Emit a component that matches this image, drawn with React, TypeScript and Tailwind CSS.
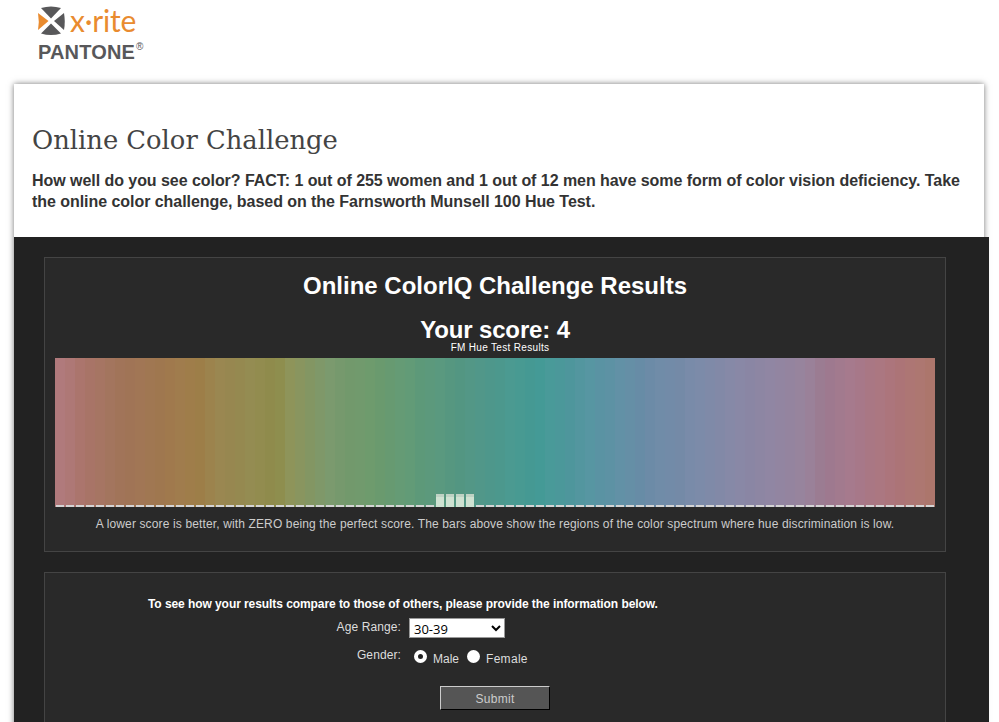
const STOPS: [number, number[]][] = [
  [0, [176, 122, 124]],
  [4, [170, 116, 108]],
  [10, [162, 116, 92]],
  [20, [160, 120, 78]],
  [26, [158, 126, 72]],
  [30, [154, 134, 80]],
  [36, [148, 140, 82]],
  [41, [142, 140, 74]],
  [43, [142, 146, 88]],
  [51, [122, 154, 110]],
  [59, [108, 154, 108]],
  [68, [94, 154, 122]],
  [79, [80, 150, 136]],
  [90, [68, 155, 150]],
  [101, [88, 148, 162]],
  [111, [108, 140, 168]],
  [120, [122, 138, 168]],
  [129, [138, 136, 166]],
  [139, [150, 132, 158]],
  [144, [156, 122, 144]],
  [150, [168, 122, 140]],
  [157, [172, 116, 122]],
  [164, [172, 118, 108]],
];

function bandColor(i: number): string {
  const p = i * (164 / 87);
  let j = 0;
  while (j < STOPS.length - 2 && STOPS[j + 1][0] <= p) j++;
  const [a, ca] = STOPS[j];
  const [b, cb] = STOPS[j + 1];
  const t = (p - a) / (b - a);
  const n = Math.sin(i * 1.7) * 0.8 + Math.sin(i * 0.61) * 0.6;
  const c = ca.map((v, k) => Math.round(v + (cb[k] - v) * t + n));
  return `rgb(${c[0]},${c[1]},${c[2]})`;
}

const BANDS = Array.from({ length: 88 }, (_, i) => i);
const TALL = [38, 39, 40, 41];

export default function App() {
  return (
    <div className="h-[722px] w-[999px] overflow-hidden bg-white font-['Liberation_Sans',Arial,sans-serif]">
      <header className="h-[84px] pl-[37px] pt-[5px]">
        <div className="flex h-[30px] items-center gap-[5px]">
          <svg width="28" height="29" viewBox="0 0 28 29" aria-label="X-Rite mark">
            <path d="M4 2 Q14 -1 24 2 L14 12.5 Z" fill="#58585a" />
            <path d="M4 27.5 Q14 30.5 24 27.5 L14 17.5 Z" fill="#58585a" />
            <path d="M1 7 L11.5 15 L1 24 Q2.5 15.5 1 7 Z" fill="#e98b2f" />
            <path d="M27 7 L17 15 L27 24 Q28.5 15.5 27 7 Z" fill="#58585a" />
          </svg>
          <span className="font-['Lato',sans-serif] text-[30px] font-normal leading-[30px] tracking-[-0.2px] text-[#e98b2f]">x·rite</span>
        </div>
        <div className="ml-[1px] mt-[6px] flex items-start text-[20px] font-bold leading-[23px] tracking-[0.15px] text-[#58585a]">
          PANTONE<span className="ml-[1px] mt-[1px] text-[10px] leading-[10px] font-normal">®</span>
        </div>
      </header>

      <main className="ml-[14px] w-[970px] shadow-[0_0_6px_#777]">
        <section className="h-[153px] bg-white pl-[18px] pr-[4px] pt-[38px]">
          <h1 className="font-['DejaVu_Serif',serif] text-[25.8px] font-normal leading-[36px] text-[#444]">Online Color Challenge</h1>
          <p className="mt-[12px] text-[16px] font-bold leading-[21px] tracking-[-0.05px] text-[#333]">
            How well do you see color? FACT: 1 out of 255 women and 1 out of 12 men have some form of color vision deficiency. Take the online color challenge, based on the Farnsworth Munsell 100 Hue Test.
          </p>
        </section>

        <section className="w-[975px] bg-[#222] pl-[30px] pt-[20px] pb-[40px]">
          <div className="h-[295px] w-[902px] border border-[#444] bg-[#292929] px-[10px] pt-[14px]">
            <h2 className="text-center text-[24px] font-bold leading-[28px] text-white">Online ColorIQ Challenge Results</h2>
            <div className="mt-[16px] text-center text-[24px] font-bold leading-[28px] tracking-[-0.15px] text-white">Your score: 4</div>
            <div className="-mt-[1px] pl-[10px] text-center text-[10px] leading-[10px] tracking-[0.32px] text-white">FM Hue Test Results</div>
            <div className="mt-[5px] flex h-[149px] w-[880px]">
              {BANDS.map((i) => (
                <div key={i} className="flex h-full w-[10px] items-end justify-center" style={{ backgroundColor: bandColor(i) }}>
                  {TALL.includes(i) ? (
                    <div className="h-[13px] w-[8px] border-t-[3px] border-t-[#bfd2c4] bg-[#cfe2d2]" />
                  ) : (
                    <div className="h-[2px] w-[8px] bg-[#d4d4d4]" />
                  )}
                </div>
              ))}
            </div>
            <p className="mt-[10px] text-center text-[12px] leading-[14px] tracking-[0.135px] text-[#ccc]">
              A lower score is better, with ZERO being the perfect score. The bars above show the regions of the color spectrum where hue discrimination is low.
            </p>
          </div>

          <form className="mt-[20px] h-[200px] w-[902px] border border-[#444] bg-[#292929] pl-[103px] pt-[24px]">
            <p className="text-[12px] font-bold leading-[14px] tracking-[-0.07px] text-white">To see how your results compare to those of others, please provide the information below.</p>
            <div className="mt-[7px] flex items-center gap-[8px]">
              <label className="w-[253px] pb-[2px] text-right text-[12px] leading-[14px] tracking-[0.1px] text-[#ddd]">Age Range:</label>
              <select defaultValue="30-39" className="h-[20px] w-[96px] border border-[#999] bg-white font-['Open_Sans',sans-serif] text-[13px] leading-[16px] text-black">
                <option>Under 20</option>
                <option>20-29</option>
                <option>30-39</option>
                <option>40-49</option>
                <option>50+</option>
              </select>
            </div>
            <div className="mt-[8px] flex h-[20px] items-center">
              <span className="w-[253px] pb-[2px] text-right text-[12px] leading-[14px] tracking-[0.1px] text-[#ddd]">Gender:</span>
              <label className="ml-[13px] flex items-center text-[12px] leading-[14px] text-[#ddd]">
                <input type="radio" name="gender" defaultChecked className="h-[13px] w-[13px] appearance-none rounded-full border-[4px] border-white bg-[#222]" />
                <span className="ml-[6px] mt-[5px]">Male</span>
              </label>
              <label className="ml-[8px] flex items-center text-[12px] leading-[14px] text-[#ddd]">
                <input type="radio" name="gender" className="h-[13px] w-[13px] appearance-none rounded-full bg-white" />
                <span className="ml-[6px] mt-[5px] tracking-[0.3px]">Female</span>
              </label>
            </div>
            <button type="button" className="ml-[292px] mt-[20px] h-[24px] w-[110px] border border-t-[#ccc] border-l-[#ccc] border-r-black border-b-black bg-[#555] pt-[1px] text-[12px] leading-[14px] tracking-[0.3px] text-[#ccc]">Submit</button>
          </form>
        </section>
      </main>
    </div>
  );
}
